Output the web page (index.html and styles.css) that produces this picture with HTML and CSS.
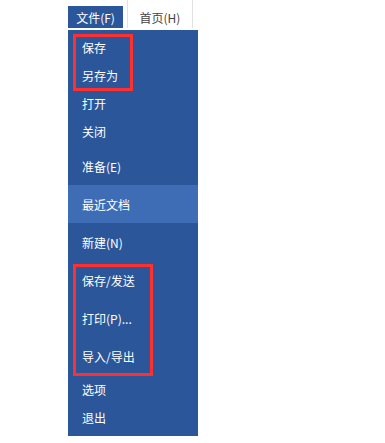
FILE: index.html
```html
<!DOCTYPE html>
<html lang="zh-CN">
<head>
    <meta charset="UTF-8">
    <title>文件菜单</title>
    <link rel="stylesheet" href="styles.css">
</head>
<body>
    <div class="app">
        <div class="tabs">
            <div class="tab active">文件(F)</div>
            <div class="tab">首页(H)</div>
        </div>
        <div class="backstage">
            <div class="item">保存</div>
            <div class="item">另存为</div>
            <div class="item">打开</div>
            <div class="item">关闭</div>
            <div class="item big first-big">准备(E)</div>
            <div class="item big selected">最近文档</div>
            <div class="item big">新建(N)</div>
            <div class="item big">保存/发送</div>
            <div class="item big">打印(P)...</div>
            <div class="item big">导入/导出</div>
            <div class="item">选项</div>
            <div class="item">退出</div>

            <!-- highlight boxes drawn over the menu -->
            <div class="mark mark-top"></div>
            <div class="mark mark-bottom"></div>
        </div>
    </div>
</body>
</html>
```

FILE: styles.css
```css
body {
    margin: 0;
    background-color: #ffffff;
    font-family: "Noto Sans CJK SC", "Noto Sans", sans-serif;
    font-size: 12px;
}

.app {
    padding: 6px 0 0 68px;
}

.tabs {
    display: flex;
    height: 22px;
}

.tab {
    display: flex;
    align-items: center;
    justify-content: center;
    height: 22px;
    color: #444444;
}

.tab.active {
    width: 55px;
    background-color: #2b579a;
    color: #ffffff;
}

.tab + .tab {
    width: 64px;
    margin-left: 4px;
    margin-top: -6px;
    padding-top: 6px;
    border-left: 1px solid #e1e1e1;
    border-right: 1px solid #e1e1e1;
}

.backstage {
    position: relative;
    width: 130px;
    margin-top: 2px;
    padding: 3px 0 5px 0;
    background-color: #2b579a;
    color: #ffffff;
}

.item {
    display: flex;
    align-items: center;
    height: 28px;
    padding-left: 14px;
}

.item.big {
    height: 38px;
}

.item.first-big {
    margin-top: 2px;
}

.item.selected {
    background-color: #3e6db5;
}

.mark {
    position: absolute;
    left: 5px;
    border: 3px solid #ff3030;
    box-sizing: border-box;
}

.mark-top {
    top: 4px;
    width: 60px;
    height: 57px;
}

.mark-bottom {
    top: 234px;
    width: 80px;
    height: 112px;
}
```
